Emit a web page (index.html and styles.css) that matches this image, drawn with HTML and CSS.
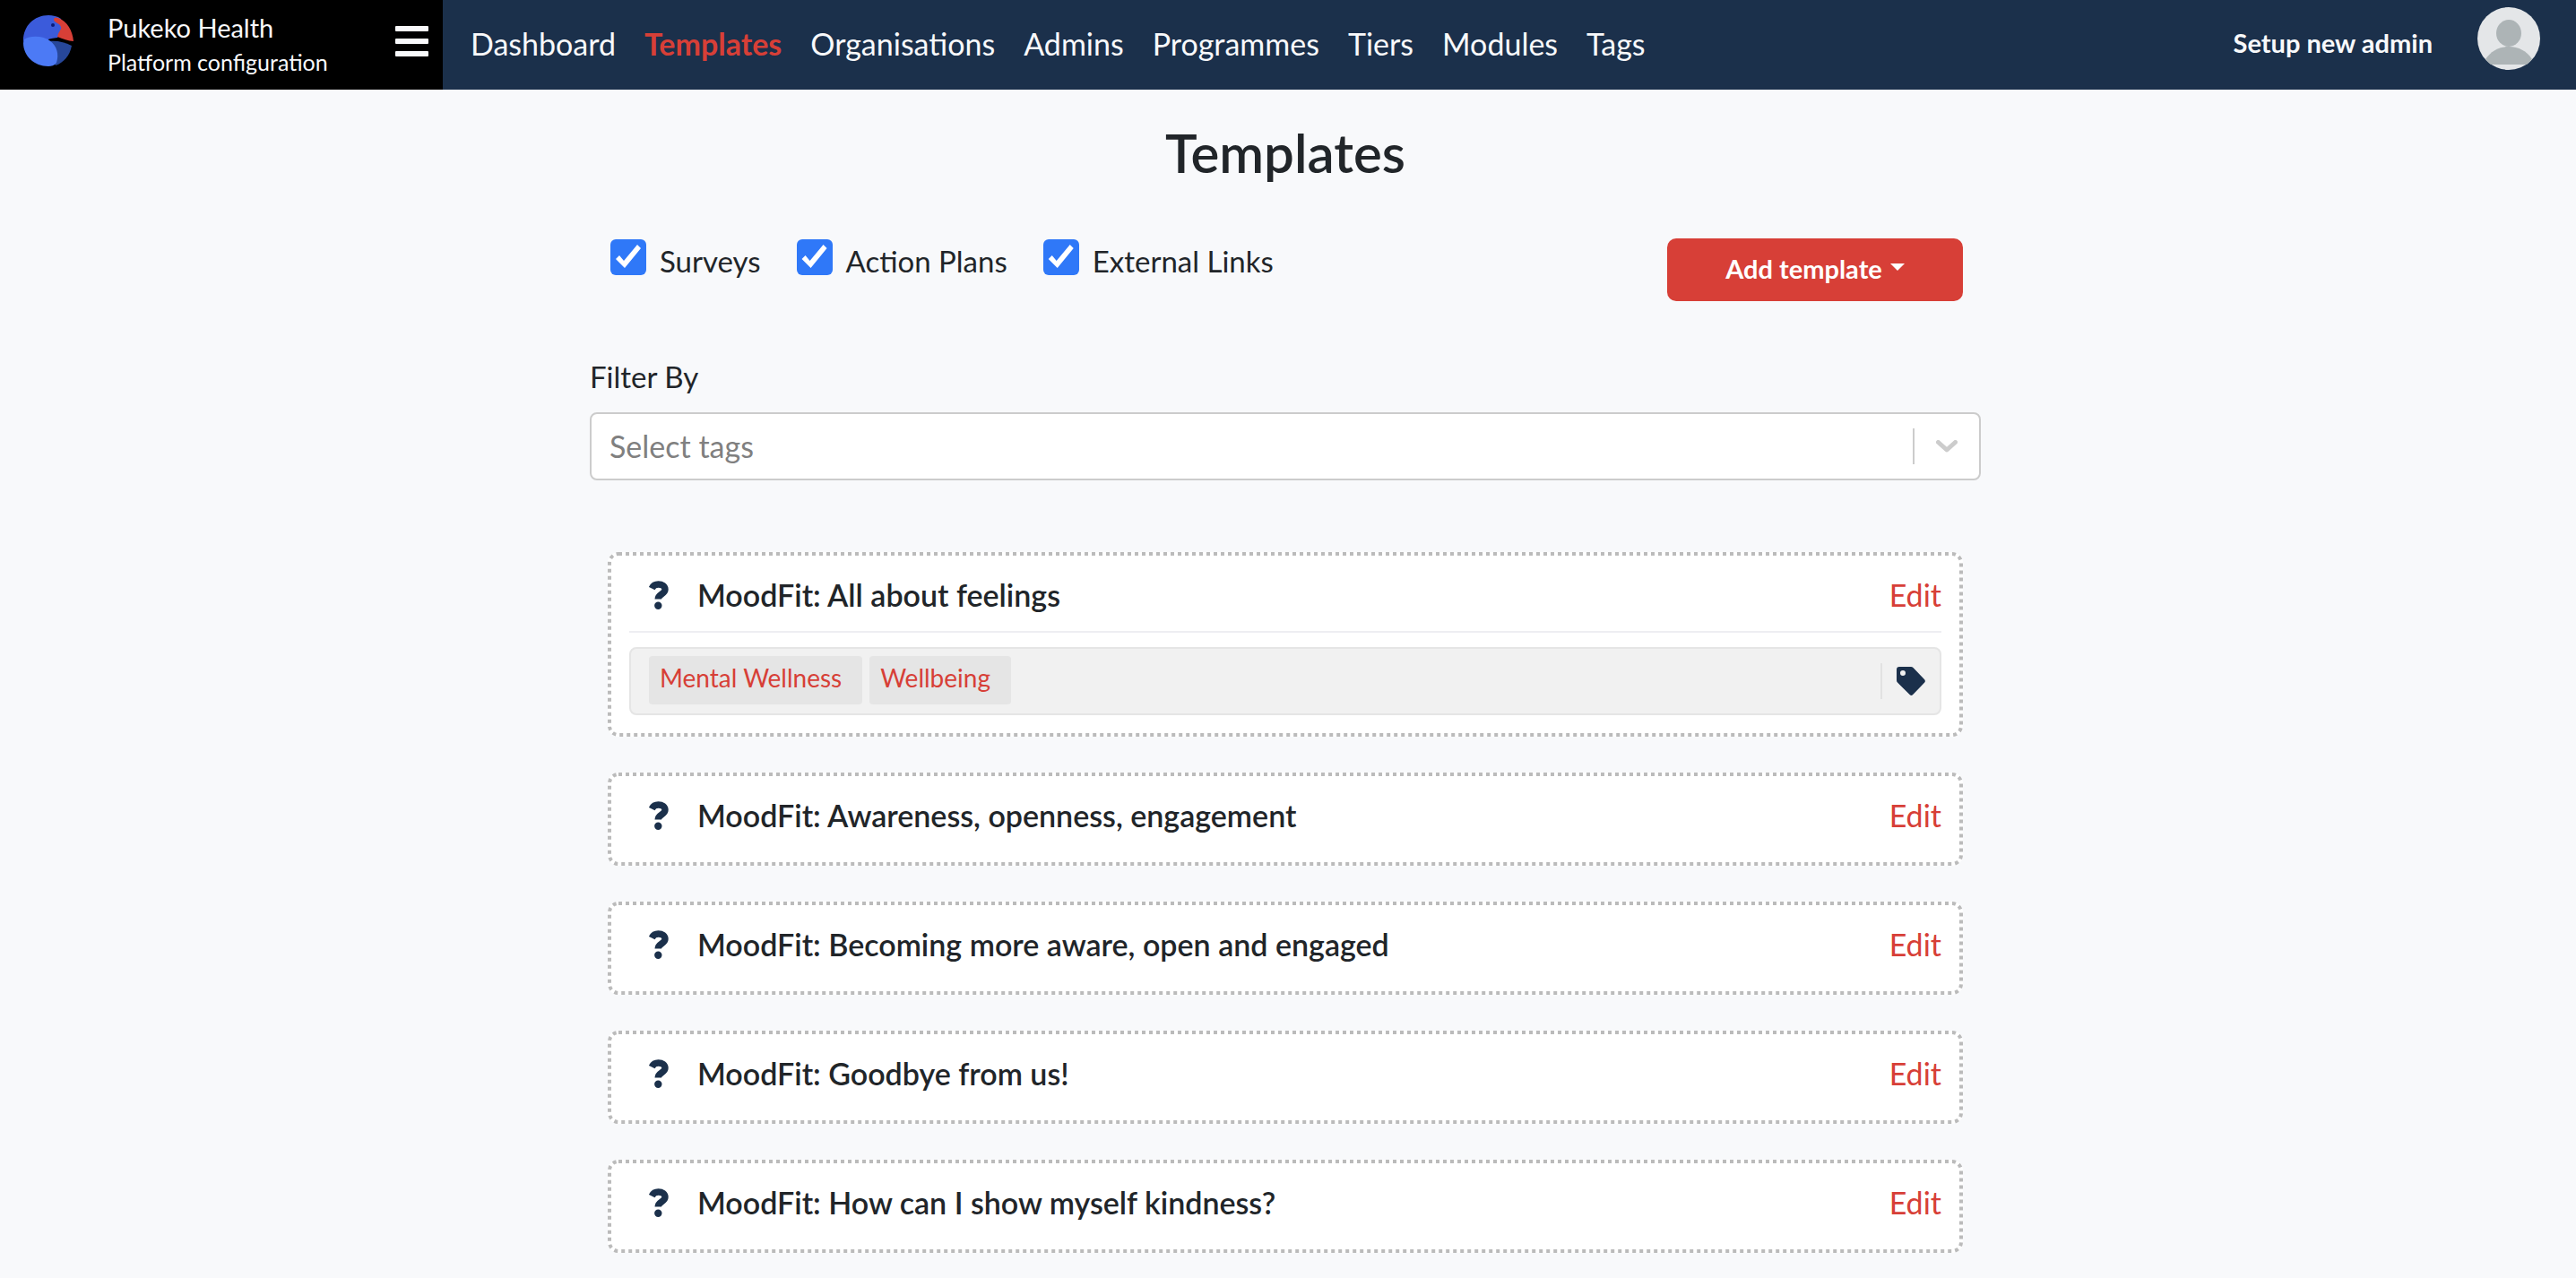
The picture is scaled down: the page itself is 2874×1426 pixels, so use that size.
FILE: index.html
```html
<!DOCTYPE html>
<html lang="en">
<head>
<meta charset="utf-8">
<meta name="viewport" content="width=device-width, initial-scale=1">
<title>Templates - Pukeko Health</title>
<link rel="stylesheet" href="styles.css">
</head>
<body>
<svg class="sprite" aria-hidden="true">
  <symbol id="question" viewBox="0 0 22 32">
    <path d="M3.2 8.6C4.6 5.6 7.200 4 10.500 4C14.800 4 18 6.100 18 9.800C18 15.200 10.200 14.600 10.200 20.600" fill="none" stroke="currentColor" stroke-width="7.400"/>
    <circle cx="10.300" cy="27.800" r="4.200" fill="currentColor"/>
  </symbol>
</svg>

<header class="topbar">
  <div class="brand">
    <svg class="brand-logo" viewBox="0 0 56 58" aria-hidden="true">
      <path d="M0 28C0 12 12 0 28 0C33 0 38 1 42 4L44 18L38 25C33 26 29 26 28 27L27 40L2 36Z" fill="#3b5bdb"/>
      <path d="M28 29C38 28 46 30 54 34C52 45 45 53 36 56L30 44Z" fill="#27479a"/>
      <path d="M1 27C8 22 22 23 29 28C38 34 40 44 37 53C35 56 31 57 28 57C12 57 0 45 0 31Z" fill="#4c7af5"/>
      <path d="M34 5C34 2 37 2 39 3C49 7 55 17 56 29C50 29 44 26 38 24C39 18 43 16 42 13C41 9 34 8 34 5Z" fill="#d73f37"/>
      <circle cx="33" cy="11" r="2" fill="#0a1a7a"/>
    </svg>
    <div class="brand-text">
      <span class="brand-name">Pukeko Health</span>
      <span class="brand-sub">Platform configuration</span>
    </div>
    <button class="menu-button" type="button" aria-label="Menu"><span></span><span></span><span></span></button>
  </div>
  <nav class="nav">
    <a href="#">Dashboard</a>
    <a class="active" href="#">Templates</a>
    <a href="#">Organisations</a>
    <a href="#">Admins</a>
    <a href="#">Programmes</a>
    <a href="#">Tiers</a>
    <a href="#">Modules</a>
    <a href="#">Tags</a>
  </nav>
  <div class="account">
    <a class="setup" href="#">Setup new admin</a>
    <button class="avatar" type="button" aria-label="Account">
      <svg viewBox="0 0 70 70" aria-hidden="true">
        <circle cx="35" cy="35" r="35" fill="#e4e6e8"/>
        <ellipse cx="35" cy="29" rx="14" ry="15" fill="#adb4b6"/>
        <path d="M9 58C15 49 24 44 35 44C46 44 55 49 61 58Q58 62 55 64H15Q12 62 9 58Z" fill="#adb4b6"/>
      </svg>
    </button>
  </div>
</header>

<main class="page">
  <h1>Templates</h1>
  <div class="toolbar">
    <div class="checks">
      <label><input type="checkbox" checked>Surveys</label>
      <label><input type="checkbox" checked>Action Plans</label>
      <label><input type="checkbox" checked>External Links</label>
    </div>
    <button class="add" type="button">Add template<span class="caret"></span></button>
  </div>

  <div class="filter">
    <label for="tags">Filter By</label>
    <div class="select">
      <select id="tags"><option>Select tags</option></select>
      <span class="indicator">
        <svg viewBox="0 0 24 14" aria-hidden="true"><path d="M2.500 2.500L12 11L21.500 2.500" fill="none" stroke="#ccc" stroke-width="5" stroke-linecap="round" stroke-linejoin="round"/></svg>
      </span>
    </div>
  </div>

  <div class="cards">
    <article class="card">
      <svg class="outline" aria-hidden="true"><rect/></svg>
      <div class="card-head">
        <svg class="question"><use href="#question"/></svg>
        <h2>MoodFit: All about feelings</h2>
        <a href="#">Edit</a>
      </div>
      <div class="tags">
        <span class="tag">Mental Wellness</span>
        <span class="tag">Wellbeing</span>
        <span class="tag-action">
          <svg viewBox="0 0 32 32" aria-hidden="true"><path fill-rule="evenodd" d="M3 0H16Q17.500 0 18.500 1L31.200 14.200Q32.600 16 31.200 17.600L18 31.200Q16.400 32.600 14.800 31.200L1 17.600Q0 16.600 0 15V3Q0 0 3 0ZM7 4A3 3 0 1 0 7 10A3 3 0 1 0 7 4Z" fill="#1b304b"/></svg>
        </span>
      </div>
    </article>
    <article class="card">
      <svg class="outline" aria-hidden="true"><rect/></svg>
      <div class="card-head">
        <svg class="question"><use href="#question"/></svg>
        <h2>MoodFit: Awareness, openness, engagement</h2>
        <a href="#">Edit</a>
      </div>
    </article>
    <article class="card">
      <svg class="outline" aria-hidden="true"><rect/></svg>
      <div class="card-head">
        <svg class="question"><use href="#question"/></svg>
        <h2>MoodFit: Becoming more aware, open and engaged</h2>
        <a href="#">Edit</a>
      </div>
    </article>
    <article class="card">
      <svg class="outline" aria-hidden="true"><rect/></svg>
      <div class="card-head">
        <svg class="question"><use href="#question"/></svg>
        <h2>MoodFit: Goodbye from us!</h2>
        <a href="#">Edit</a>
      </div>
    </article>
    <article class="card">
      <svg class="outline" aria-hidden="true"><rect/></svg>
      <div class="card-head">
        <svg class="question"><use href="#question"/></svg>
        <h2>MoodFit: How can I show myself kindness?</h2>
        <a href="#">Edit</a>
      </div>
    </article>
  </div>
</main>
</body>
</html>
```
FILE: styles.css
```css
:root {
  --navy: #1b304b;
  --red: #d73f37;
  --ink: #212529;
  --light: #f8f9fb;
}

* { box-sizing: border-box; }

body {
  margin: 0;
  background: var(--light);
  color: var(--ink);
  font-family: Lato, "Noto Sans", sans-serif;
  font-size: 34px;
  line-height: 48px;
}

a { text-decoration: none; }
button, select, input { font: inherit; margin: 0; }
button { border: 0; padding: 0; cursor: pointer; }
.sprite { display: none; }

/* Top bar */
.topbar {
  display: flex;
  align-items: center;
  height: 100px;
  background: var(--navy);
  color: var(--light);
}

.brand {
  display: flex;
  align-items: center;
  align-self: stretch;
  width: 494px;
  padding: 0 16px 8px 26px;
  background: #000;
}

.brand-logo { width: 56px; height: 58px; }

.brand-text {
  display: flex;
  flex: 1;
  flex-direction: column;
  padding: 8px 0 0 38px;
  line-height: 39px;
}

.brand-name { font-size: 29px; }
.brand-sub { font-size: 25px; }

.menu-button {
  display: grid;
  gap: 8px;
  width: 37px;
  background: none;
}

.menu-button span {
  height: 6px;
  border-radius: 1px;
  background: var(--light);
}

.nav {
  display: flex;
  gap: 32px;
  padding: 0 0 2px 31px;
}

.nav a { color: var(--light); }
.nav .active { color: var(--red); font-weight: 700; }

.account {
  display: flex;
  align-items: center;
  gap: 50px;
  margin-left: auto;
  padding-right: 40px;
}

.setup {
  padding-bottom: 4px;
  color: var(--light);
  font-size: 29px;
  font-weight: 700;
}

.avatar {
  width: 70px;
  height: 70px;
  margin-bottom: 14px;
  border-radius: 50%;
  background: none;
}

.avatar svg { display: block; }

/* Page */
.page {
  max-width: 1558px;
  margin: 0 auto;
  padding: 36px 6px 28px 0;
}

h1 {
  margin: 0;
  font-size: 60px;
  font-weight: 600;
  line-height: 68px;
  text-align: center;
}

.toolbar {
  display: flex;
  justify-content: space-between;
  align-items: flex-start;
  padding: 62px 20px 0;
}

.checks {
  display: flex;
  gap: 40px;
  padding-left: 3px;
}

.checks label {
  display: flex;
  align-items: flex-start;
  gap: 15px;
  padding-top: 1px;
  font-size: 33px;
}

.checks input {
  appearance: none;
  width: 40px;
  height: 40px;
  border-radius: 6px;
  background: #2f78f8;
}

.checks input:checked::before {
  content: "";
  display: block;
  height: 40px;
  background: #fff;
  clip-path: polygon(6px 22px, 10px 18px, 15px 24px, 30px 6px, 34px 10px, 16px 32px);
}

.add {
  display: flex;
  justify-content: center;
  width: 330px;
  padding: 10px 0 12px;
  border-radius: 10px;
  background: var(--red);
  color: #fff;
  font-size: 29px;
  font-weight: 700;
}

.caret {
  margin: 18px 0 0 9px;
  align-self: flex-start;
  border: 8px solid transparent;
  border-top-color: #fff;
  border-bottom: 0;
}

.filter { padding-top: 60px; }
.filter label { display: block; font-size: 33px; }

.select {
  position: relative;
  margin-top: 16px;
}

.select select {
  appearance: none;
  display: block;
  width: 100%;
  height: 76px;
  padding: 0 80px 0 20px;
  border: 2px solid #ccc;
  border-radius: 8px;
  background: #fff;
  color: #808080;
}

.indicator {
  position: absolute;
  top: 18px;
  right: 2px;
  display: grid;
  place-items: center;
  width: 74px;
  height: 40px;
  border-left: 2px solid #ccc;
  pointer-events: none;
}

.indicator svg { width: 24px; height: 14px; }

.cards {
  display: grid;
  gap: 40px;
  padding: 80px 20px 0;
}

.card {
  position: relative;
  padding: 24px;
  border-radius: 12px;
  background: #fff;
}

/* Square-dotted card outline */
.outline {
  position: absolute;
  inset: 0;
  width: 100%;
  height: 100%;
  pointer-events: none;
}

.outline rect {
  x: 2px;
  y: 2px;
  width: calc(100% - 4px);
  height: calc(100% - 4px);
  rx: 10px;
  fill: none;
  stroke: #bbb;
  stroke-width: 4px;
  stroke-dasharray: 4 4;
}

.card-head {
  display: flex;
  align-items: flex-start;
  min-height: 56px;
  padding-left: 22px;
}

.question {
  width: 22px;
  height: 32px;
  margin-top: 8px;
  color: var(--navy);
}

h2 {
  flex: 1;
  margin: 0;
  padding-left: 32px;
  font-size: 34px;
  font-weight: 600;
  line-height: 48px;
}

.card-head a { color: var(--red); }

.tags {
  position: relative;
  display: flex;
  align-items: center;
  gap: 8px;
  height: 76px;
  margin-top: 26px;
  padding: 0 0 2px 20px;
  border: 2px solid #e5e5e5;
  border-radius: 8px;
  background: #f1f1f1;
}

/* Rule between the card heading and its tags */
.tags::before {
  content: "";
  position: absolute;
  top: -20px;
  right: -2px;
  left: -2px;
  height: 2px;
  background: #eeeef2;
}

.tag {
  padding: 0 23px 6px 12px;
  border-radius: 4px;
  background: #e5e5e5;
  color: var(--red);
  font-size: 28px;
}

.tag-action {
  display: grid;
  place-items: center;
  width: 66px;
  height: 40px;
  margin: 2px 0 0 auto;
  border-left: 2px solid #e2e2e2;
}

.tag-action svg { width: 32px; height: 32px; }
```
